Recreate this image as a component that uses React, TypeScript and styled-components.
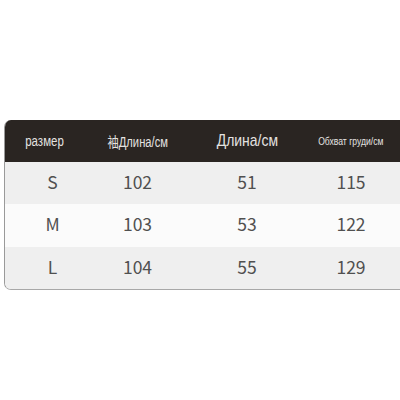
import React from "react";
import styled, { createGlobalStyle } from "styled-components";

const Global = createGlobalStyle`
  html, body { margin: 0; padding: 0; background: #ffffff; }
  body { width: 400px; height: 400px; overflow: hidden; }
`;

const Page = styled.div`
  width: 400px;
  height: 400px;
  padding: 120px 0 0 4px;
  box-sizing: border-box;
  font-family: "Noto Sans", "Noto Sans CJK SC", sans-serif;
`;

const Table = styled.div`
  width: 395px;
  border-left: 1px solid #9a9a9a;
  border-bottom: 1px solid #a8a8a8;
  border-radius: 7px 0 0 7px;
  overflow: hidden;
  display: flex;
  flex-direction: column;
`;

const Row = styled.div<{ $bg: string; $h: number }>`
  display: grid;
  grid-template-columns: 79px 107px 112px 96px;
  align-items: center;
  height: ${(p) => p.$h}px;
  background: ${(p) => p.$bg};
`;

const HeadCell = styled.div<{ $size: number; $scale: number }>`
  display: flex;
  justify-content: center;
  color: #e4e2e0;
  font-family: "Liberation Sans", "Noto Sans CJK SC", sans-serif;
  font-size: ${(p) => p.$size}px;
  white-space: nowrap;
  span {
    display: inline-block;
    transform: scaleX(${(p) => p.$scale});
  }
`;

const Cell = styled.div<{ $shift?: number }>`
  display: flex;
  justify-content: center;
  padding-left: ${(p) => p.$shift ?? 0}px;
  padding-bottom: 3px;
  line-height: 1;
  color: #505050;
  font-size: 17.5px;
  font-family: "Noto Sans CJK SC", "Noto Sans", sans-serif;
`;

const rows = [
  { s: "S", a: "102", b: "51", c: "115", bg: "#efefef" },
  { s: "M", a: "103", b: "53", c: "122", bg: "#fbfbfb" },
  { s: "L", a: "104", b: "55", c: "129", bg: "#efefef" },
];

export default function App() {
  return (
    <Page>
      <Global />
      <Table>
        <Row $bg="#2a2522" $h={42}>
          <HeadCell $size={14} $scale={0.82}><span>размер</span></HeadCell>
          <HeadCell $size={14} $scale={0.8}><span>袖Длина/см</span></HeadCell>
          <HeadCell $size={17} $scale={0.82}><span>Длина/см</span></HeadCell>
          <HeadCell $size={11} $scale={0.78}><span>Обхват груди/см</span></HeadCell>
        </Row>
        {rows.map((r) => (
          <Row key={r.s} $bg={r.bg} $h={r.s === "M" ? 43 : 42}>
            <Cell $shift={16}>{r.s}</Cell>
            <Cell>{r.a}</Cell>
            <Cell>{r.b}</Cell>
            <Cell>{r.c}</Cell>
          </Row>
        ))}
      </Table>
    </Page>
  );
}
